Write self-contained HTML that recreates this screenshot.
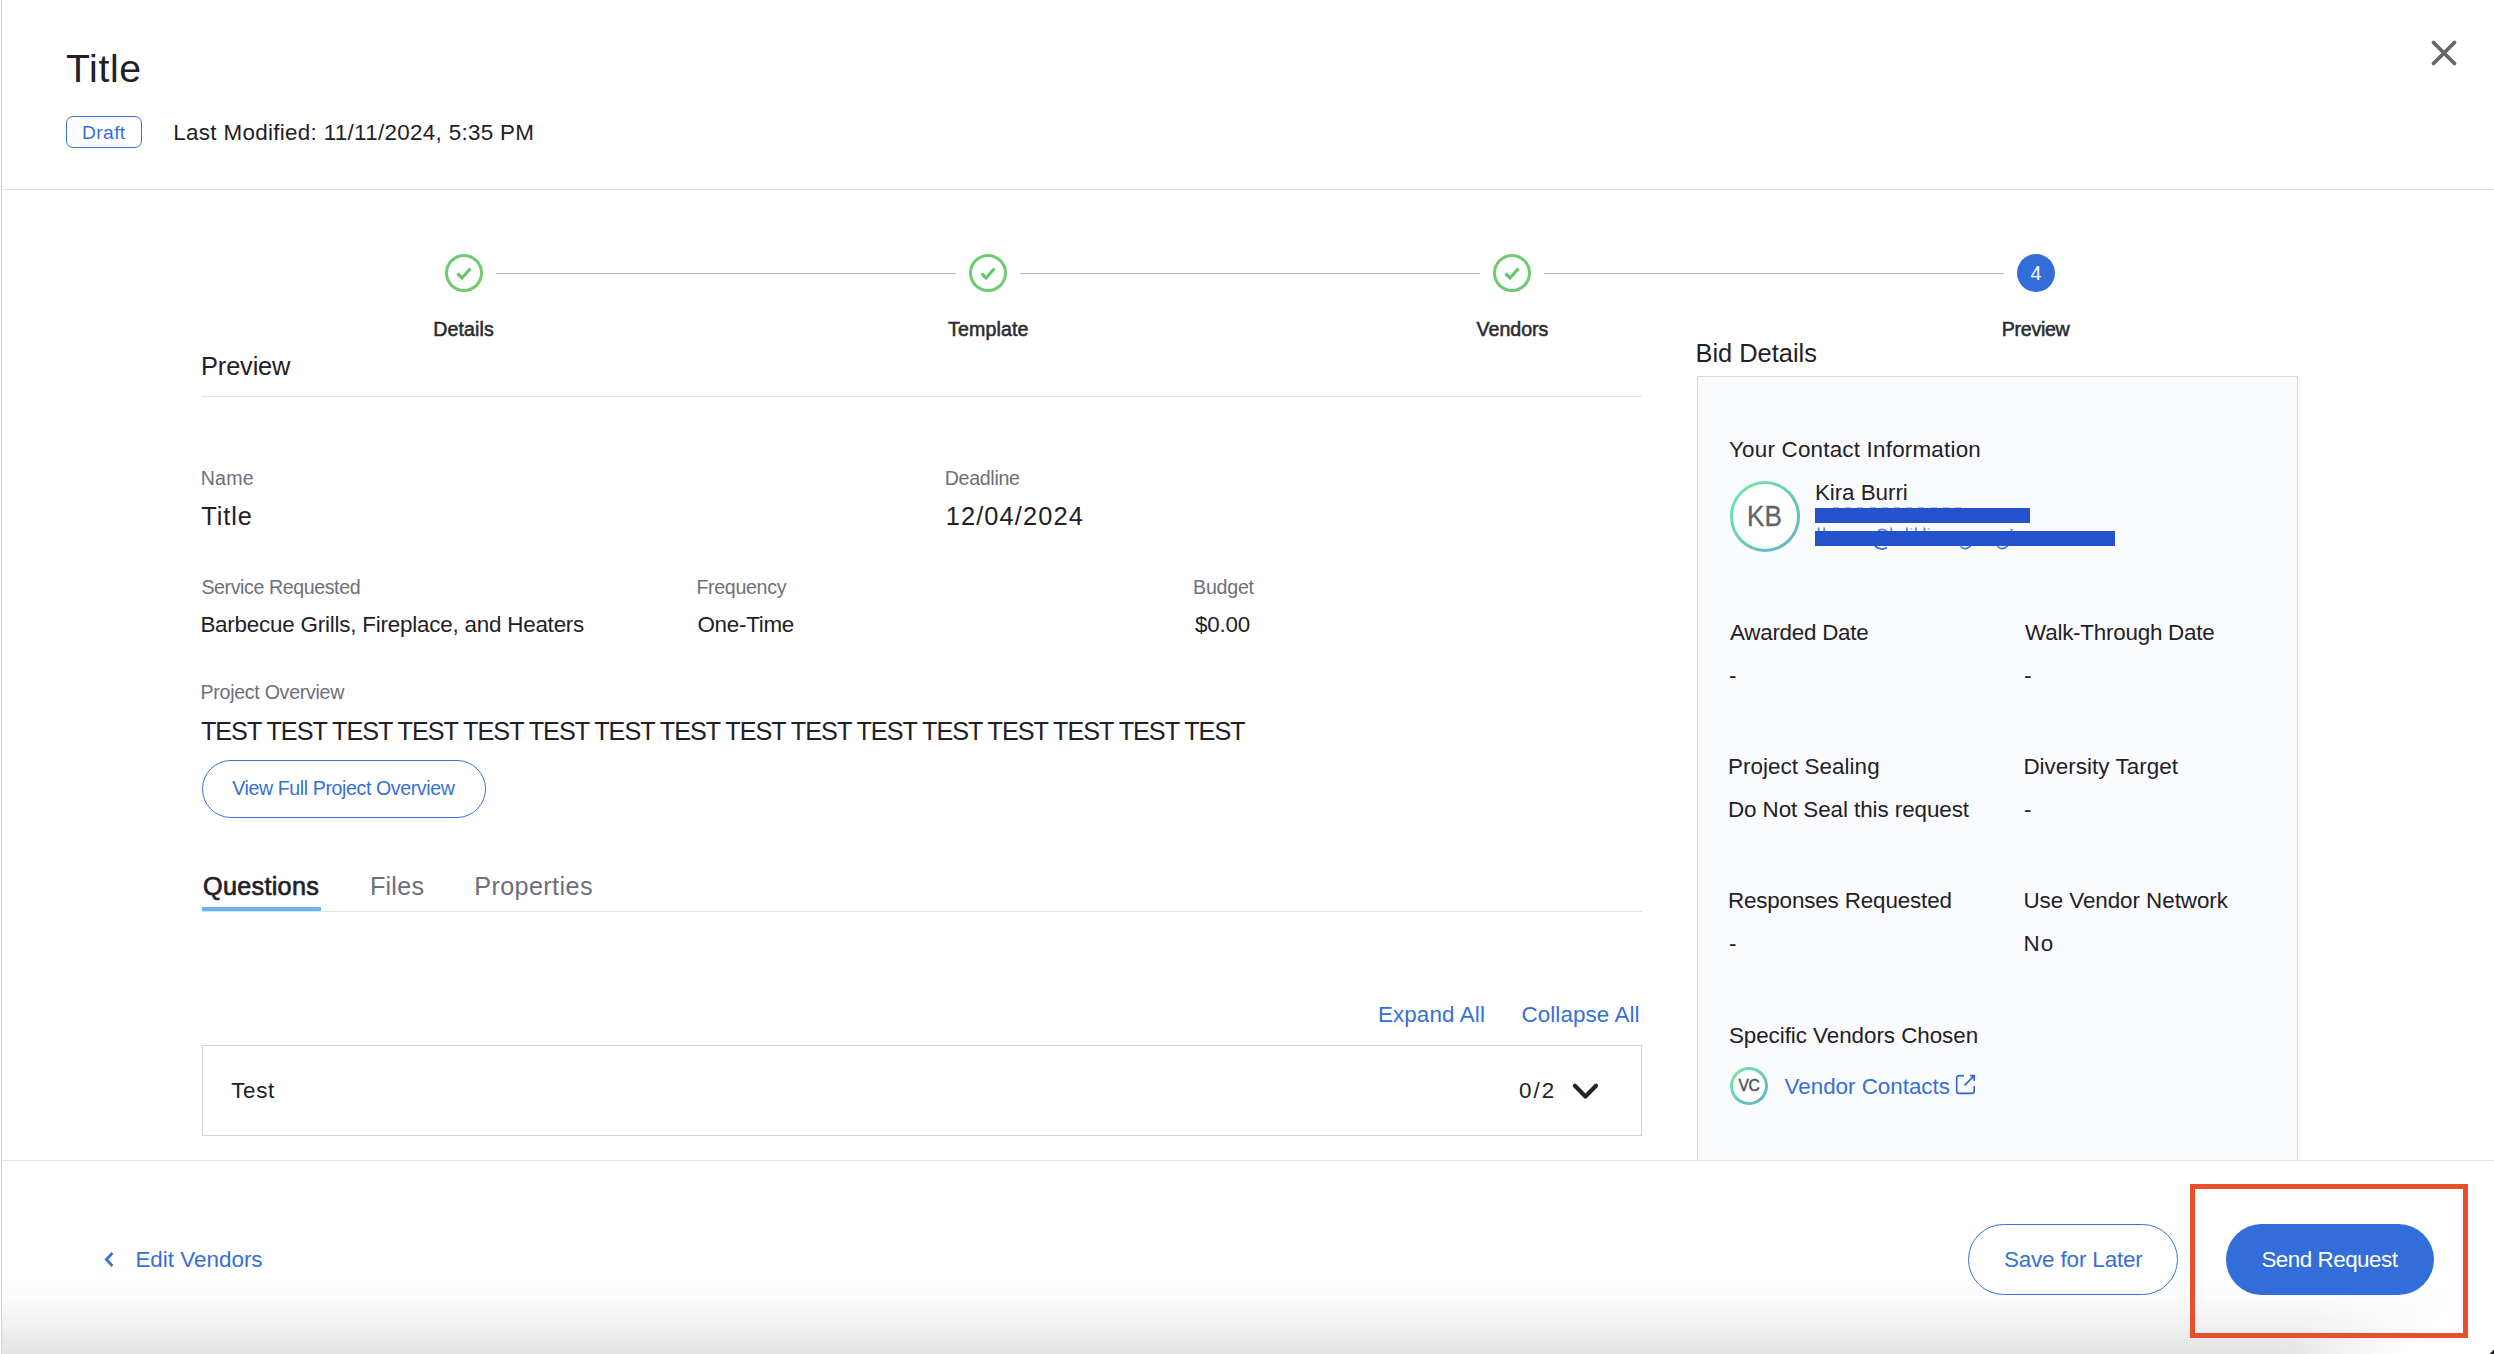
<!DOCTYPE html>
<html lang="en">
<head>
<meta charset="utf-8">
<title>Title - Preview</title>
<style>
html,body{margin:0;padding:0}
body{width:2494px;height:1354px;position:relative;overflow:hidden;background:#fff;font-family:"Liberation Sans", sans-serif;}
.t{position:absolute;white-space:nowrap;line-height:1;margin:0}
.s{position:absolute;box-sizing:border-box}
</style>
</head>
<body>
<!-- page frame -->
<div class="s" style="left:1px;top:0;width:1px;height:1354px;background:#d2d4d9"></div>
<div class="s" style="left:2px;top:189px;width:2492px;height:1px;background:#e1e3e7"></div>
<!-- close icon -->
<svg class="s" style="left:2429.5px;top:38.5px" width="28" height="28" viewBox="0 0 28 28"><path d="M3.5 3.5 L24.5 24.5 M24.5 3.5 L3.5 24.5" stroke="#666" stroke-width="3.8" fill="none" stroke-linecap="round"/></svg>
<!-- draft badge -->
<div class="s" style="left:66px;top:116px;width:76px;height:32px;border:1.5px solid #3a72d9;border-radius:7px;background:#fff"></div>
<!-- stepper -->
<div class="s" style="left:496px;top:273px;width:460px;height:1px;background:#b4b4b4"></div>
<div class="s" style="left:1020px;top:273px;width:460px;height:1px;background:#b4b4b4"></div>
<div class="s" style="left:1544px;top:273px;width:460px;height:1px;background:#b4b4b4"></div>
<svg class="s" style="left:443.5px;top:253px" width="40" height="40" viewBox="0 0 40 40"><circle cx="20" cy="20" r="17.5" fill="none" stroke="#6fca72" stroke-width="3"/><path d="M13.5 20.5 L18 25 L26.5 15.5" fill="none" stroke="#68c66b" stroke-width="3.2"/></svg>
<svg class="s" style="left:968px;top:253px" width="40" height="40" viewBox="0 0 40 40"><circle cx="20" cy="20" r="17.5" fill="none" stroke="#6fca72" stroke-width="3"/><path d="M13.5 20.5 L18 25 L26.5 15.5" fill="none" stroke="#68c66b" stroke-width="3.2"/></svg>
<svg class="s" style="left:1492px;top:253px" width="40" height="40" viewBox="0 0 40 40"><circle cx="20" cy="20" r="17.5" fill="none" stroke="#6fca72" stroke-width="3"/><path d="M13.5 20.5 L18 25 L26.5 15.5" fill="none" stroke="#68c66b" stroke-width="3.2"/></svg>
<div class="s" style="left:2017px;top:254px;width:38px;height:38px;border-radius:50%;background:#336dd9"></div>
<!-- left panel lines -->
<div class="s" style="left:202px;top:396px;width:1440px;height:1px;background:#e0e2e7"></div>
<div class="s" style="left:202px;top:760px;width:284px;height:58px;border:1.5px solid #3a72d9;border-radius:29px;background:#fff"></div>
<div class="s" style="left:202px;top:911px;width:1440px;height:1px;background:#dfe1e5"></div>
<div class="s" style="left:202px;top:907px;width:119px;height:4.2px;background:#6ab5f5"></div>
<div class="s" style="left:202px;top:1045px;width:1440px;height:91px;border:1.3px solid #d2d4d8;background:#fff"></div>
<svg class="s" style="left:1569px;top:1078px" width="34" height="26" viewBox="0 0 34 26"><path d="M5.9 7.8 L16.45 18.5 L27 7.8" fill="none" stroke="#222428" stroke-width="4.2" stroke-linecap="round" stroke-linejoin="round"/></svg>
<!-- right panel -->
<div class="s" style="left:1697px;top:376px;width:601px;height:785px;border:1.3px solid #d6d8dd;border-bottom:none;background:#fafbfd"></div>
<div class="s" style="left:1729.8px;top:481.1px;width:70.5px;height:70.6px;border-radius:50%;background:linear-gradient(135deg,#77e5a6 8%,#5cb6c6 92%)"></div>
<div class="s" style="left:1732.6px;top:483.9px;width:64.9px;height:65px;border-radius:50%;background:#fff"></div>
<div class="s" style="left:1833px;top:506.5px;width:132px;height:2px;background:repeating-linear-gradient(90deg,#5f83de 0 6px,rgba(95,131,222,0) 6px 12.2px);opacity:.55"></div>
<div class="s" style="left:1815px;top:508px;width:215px;height:14.7px;background:#2452cc"></div>
<svg class="s" style="left:1816px;top:527.3px" width="200" height="4" viewBox="0 0 200 4"><path d="M2.6 0.4 V4 M8.2 0.4 V4 M62 4 Q66 0.6 70.5 4 M75.3 0.4 V4 M91 0.6 V4 M95.4 1.6 V2.6 M100 0.4 V4 M108.4 0.4 V4 M112.6 1.6 V2.6 M195.6 1.8 V4" fill="none" stroke="#3e6edb" stroke-width="1.7" opacity=".85"/></svg>
<svg class="s" style="left:1870px;top:545px" width="145" height="7" viewBox="0 0 145 7"><path d="M4.5 0.5 Q10.5 6.5 17 2.5 M90.5 1.5 Q95.5 6 100.5 1 M127.5 1.5 Q132.5 6 137.5 1" fill="none" stroke="#3a6cdc" stroke-width="1.6"/></svg>
<div class="s" style="left:1814.6px;top:531.2px;width:300px;height:14.6px;background:#2452cc"></div>
<div class="s" style="left:1730px;top:1067px;width:38px;height:38px;border-radius:50%;background:linear-gradient(135deg,#77e5a6 8%,#5cb6c6 92%)"></div>
<div class="s" style="left:1732.9px;top:1069.9px;width:32.2px;height:32.2px;border-radius:50%;background:#fff"></div>
<svg class="s" style="left:1955px;top:1074px" width="22" height="22" viewBox="0 0 22 22"><path d="M9.05 1.6 H4.2 A2.5 2.5 0 0 0 1.7 4.1 V16.9 A2.5 2.5 0 0 0 4.2 19.4 H16.7 A2.5 2.5 0 0 0 19.2 16.9 V12" fill="none" stroke="#2f64d0" stroke-width="1.6"/><path d="M15.1 1.6 H19.2 V6.7 M19.2 1.6 L9.6 11.4" fill="none" stroke="#2f64d0" stroke-width="1.7"/></svg>
<!-- footer gradient -->
<div class="s" style="left:2px;top:1161px;width:2492px;height:193px;background:#fff"></div>
<div class="s" style="left:2px;top:1280px;width:2492px;height:74px;background:linear-gradient(to bottom,#ffffff 0%,#fcfcfc 20%,#f6f6f6 45%,#eeeeee 70%,#e3e3e3 100%)"></div>
<div class="s" style="left:2200px;top:1270px;width:294px;height:84px;background:linear-gradient(135deg,rgba(255,255,255,0) 42%,#fff 76%)"></div>
<div class="s" style="left:2px;top:1160px;width:2492px;height:1px;background:#dfe1e5"></div>
<!-- footer -->
<svg class="s" style="left:100px;top:1247px" width="20" height="24" viewBox="0 0 20 24"><path d="M12.5 6 L6.3 12.5 L12.5 19" fill="none" stroke="#356fd8" stroke-width="2.6"/></svg>
<div class="s" style="left:1968px;top:1224px;width:210px;height:71px;border:1.5px solid #3a72d9;border-radius:36px;background:#fff"></div>
<div class="s" style="left:2226px;top:1224px;width:208px;height:71px;border-radius:36px;background:#336dd9"></div>
<div class="s" style="left:2190px;top:1184px;width:278px;height:154px;border:5px solid #e8502c"></div>
<svg class="s" style="left:2489px;top:1349px" width="5" height="5" viewBox="0 0 5 5"><path d="M5 0.6 L5 5 L0.6 5 Z" fill="#161b26"/></svg>
<header aria-label="Request header">
<div class="t" style="left:66.00px;top:49.00px;color:#1f2126;font-size:39.2px;letter-spacing:0.600px;">Title</div>
<div class="t" style="left:82.10px;top:123.00px;color:#356fd8;font-size:19.2px;letter-spacing:0.375px;">Draft</div>
<div class="t" style="left:173.30px;top:122.00px;color:#1f2126;font-size:22.4px;letter-spacing:0.318px;">Last Modified: 11/11/2024, 5:35 PM</div>
</header>
<nav aria-label="Steps">
<div class="t" style="left:433.30px;top:320.00px;color:#2a2c31;font-size:19.6px;-webkit-text-stroke:0.55px currentColor;letter-spacing:0.083px;">Details</div>
<div class="t" style="left:948.10px;top:320.00px;color:#2a2c31;font-size:19.6px;-webkit-text-stroke:0.55px currentColor;letter-spacing:0.129px;">Template</div>
<div class="t" style="left:1476.60px;top:320.00px;color:#2a2c31;font-size:19.6px;-webkit-text-stroke:0.55px currentColor;letter-spacing:-0.017px;">Vendors</div>
<div class="t" style="left:2001.80px;top:320.00px;color:#2a2c31;font-size:19.6px;-webkit-text-stroke:0.55px currentColor;letter-spacing:-0.300px;">Preview</div>
<div class="t" style="left:2030.60px;top:264.00px;color:#ffffff;font-size:19.6px;">4</div>
</nav>
<main aria-label="Preview">
<div class="t" style="left:201.10px;top:354.00px;color:#1f2126;font-size:25.4px;letter-spacing:-0.167px;">Preview</div>
<div class="t" style="left:200.70px;top:469.00px;color:#6c7078;font-size:19.6px;letter-spacing:0.267px;">Name</div>
<div class="t" style="left:201.20px;top:504.00px;color:#1f2126;font-size:25.4px;letter-spacing:0.900px;">Title</div>
<div class="t" style="left:944.70px;top:469.00px;color:#6c7078;font-size:19.6px;letter-spacing:-0.300px;">Deadline</div>
<div class="t" style="left:945.70px;top:504.00px;color:#1f2126;font-size:25.4px;letter-spacing:1.111px;">12/04/2024</div>
<div class="t" style="left:201.40px;top:578.00px;color:#6c7078;font-size:19.6px;letter-spacing:-0.400px;">Service Requested</div>
<div class="t" style="left:200.40px;top:614.00px;color:#1f2126;font-size:22.4px;letter-spacing:-0.213px;">Barbecue Grills, Fireplace, and Heaters</div>
<div class="t" style="left:696.40px;top:578.00px;color:#6c7078;font-size:19.6px;letter-spacing:-0.312px;">Frequency</div>
<div class="t" style="left:697.40px;top:614.00px;color:#1f2126;font-size:22.4px;letter-spacing:-0.257px;">One-Time</div>
<div class="t" style="left:1193.10px;top:578.00px;color:#6c7078;font-size:19.6px;letter-spacing:-0.240px;">Budget</div>
<div class="t" style="left:1195.10px;top:614.00px;color:#1f2126;font-size:22.4px;letter-spacing:-0.250px;">$0.00</div>
<div class="t" style="left:200.60px;top:683.00px;color:#6c7078;font-size:19.6px;letter-spacing:-0.293px;">Project Overview</div>
<div class="t" style="left:200.90px;top:719.00px;color:#1f2126;font-size:25.2px;letter-spacing:-0.981px;">TEST TEST TEST TEST TEST TEST TEST TEST TEST TEST TEST TEST TEST TEST TEST TEST</div>
<div class="t" style="left:232.20px;top:779.00px;color:#356fd8;font-size:19.6px;letter-spacing:-0.400px;">View Full Project Overview</div>
<div class="t" style="left:203.10px;top:874.00px;color:#1f2126;font-size:25.2px;-webkit-text-stroke:0.7px currentColor;letter-spacing:0.287px;">Questions</div>
<div class="t" style="left:369.90px;top:874.00px;color:#6c7078;font-size:25.2px;letter-spacing:0.225px;">Files</div>
<div class="t" style="left:474.20px;top:874.00px;color:#6c7078;font-size:25.2px;letter-spacing:0.389px;">Properties</div>
<div class="t" style="left:1377.90px;top:1004.00px;color:#356fd8;font-size:22.4px;letter-spacing:0.133px;">Expand All</div>
<div class="t" style="left:1521.40px;top:1004.00px;color:#356fd8;font-size:22.4px;letter-spacing:0.109px;">Collapse All</div>
<div class="t" style="left:231.20px;top:1080.00px;color:#1f2126;font-size:22.4px;letter-spacing:0.667px;">Test</div>
<div class="t" style="left:1518.90px;top:1080.00px;color:#1f2126;font-size:22.4px;letter-spacing:2.100px;">0/2</div>
</main>
<aside aria-label="Bid Details">
<div class="t" style="left:1695.50px;top:341.00px;color:#1f2126;font-size:25.4px;">Bid Details</div>
<div class="t" style="left:1729.00px;top:439.00px;color:#1f2126;font-size:22.4px;letter-spacing:0.213px;">Your Contact Information</div>
<div class="t" style="left:1747.08px;top:502.00px;color:#616366;font-size:28.6px;-webkit-text-stroke:0.3px currentColor;transform:scaleX(0.9114);transform-origin:0 50%;">KB</div>
<div class="t" style="left:1814.90px;top:482.00px;color:#1f2126;font-size:22.4px;letter-spacing:-0.044px;">Kira Burri</div>
<div class="t" style="left:1730.00px;top:622.00px;color:#1f2126;font-size:22.4px;letter-spacing:-0.255px;">Awarded Date</div>
<div class="t" style="left:1729.00px;top:665.00px;color:#1f2126;font-size:22.4px;">-</div>
<div class="t" style="left:2025.10px;top:622.00px;color:#1f2126;font-size:22.4px;letter-spacing:-0.231px;">Walk-Through Date</div>
<div class="t" style="left:2024.10px;top:665.00px;color:#1f2126;font-size:22.4px;">-</div>
<div class="t" style="left:1727.90px;top:756.00px;color:#1f2126;font-size:22.4px;letter-spacing:0.079px;">Project Sealing</div>
<div class="t" style="left:1727.90px;top:799.00px;color:#1f2126;font-size:22.4px;letter-spacing:-0.065px;">Do Not Seal this request</div>
<div class="t" style="left:2023.40px;top:756.00px;color:#1f2126;font-size:22.4px;letter-spacing:0.040px;">Diversity Target</div>
<div class="t" style="left:2024.10px;top:799.00px;color:#1f2126;font-size:22.4px;">-</div>
<div class="t" style="left:1727.90px;top:890.00px;color:#1f2126;font-size:22.4px;letter-spacing:-0.139px;">Responses Requested</div>
<div class="t" style="left:1729.00px;top:933.00px;color:#1f2126;font-size:22.4px;">-</div>
<div class="t" style="left:2023.40px;top:890.00px;color:#1f2126;font-size:22.4px;letter-spacing:-0.047px;">Use Vendor Network</div>
<div class="t" style="left:2023.40px;top:933.00px;color:#1f2126;font-size:22.4px;letter-spacing:1.200px;">No</div>
<div class="t" style="left:1728.90px;top:1025.00px;color:#1f2126;font-size:22.4px;letter-spacing:-0.045px;">Specific Vendors Chosen</div>
<div class="t" style="left:1738.60px;top:1078.00px;color:#505358;font-size:15.6px;-webkit-text-stroke:0.5px currentColor;letter-spacing:-0.600px;">VC</div>
<div class="t" style="left:1784.60px;top:1076.00px;color:#356fd8;font-size:22.4px;letter-spacing:-0.014px;">Vendor Contacts</div>
</aside>
<footer aria-label="Actions">
<div class="t" style="left:135.40px;top:1249.00px;color:#356fd8;font-size:22.4px;letter-spacing:0.018px;">Edit Vendors</div>
<div class="t" style="left:2003.90px;top:1249.00px;color:#356fd8;font-size:22.4px;letter-spacing:-0.131px;">Save for Later</div>
<div class="t" style="left:2261.40px;top:1249.00px;color:#ffffff;font-size:22.4px;letter-spacing:-0.482px;">Send Request</div>
</footer>
</body>
</html>
